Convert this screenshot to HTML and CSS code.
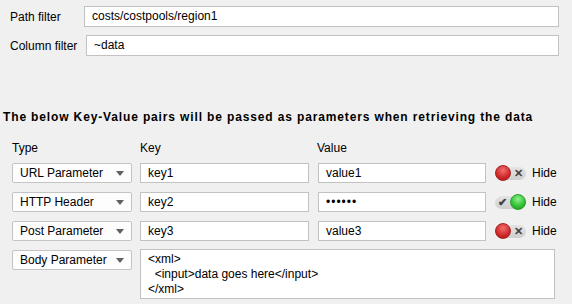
FILE: index.html
```html
<!DOCTYPE html>
<html>
<head>
<meta charset="utf-8">
<link rel="stylesheet" href="styles.css">
</head>
<body>
<div class="filters">
  <div class="frow">
    <span class="flabel">Path filter</span>
    <div class="field f1">costs/costpools/region1</div>
  </div>
  <div class="frow">
    <span class="flabel">Column filter</span>
    <div class="field f2">~data</div>
  </div>
</div>
<div class="heading">The below Key-Value pairs will be passed as parameters when retrieving the data</div>
<div class="grid">
  <div class="hdr">Type</div>
  <div class="hdr">Key</div>
  <div class="hdr">Value</div>
  <div></div>

  <div class="combo"><span>URL Parameter</span><span class="arrow"></span></div>
  <div class="field">key1</div>
  <div class="field">value1</div>
  <div class="hidecell"><span class="toggle off"><span class="knob"></span><span class="mark">&#x2715;</span></span><span>Hide</span></div>

  <div class="combo"><span>HTTP Header</span><span class="arrow"></span></div>
  <div class="field">key2</div>
  <div class="field dots">&#x2022;&#x2022;&#x2022;&#x2022;&#x2022;&#x2022;</div>
  <div class="hidecell"><span class="toggle on"><span class="mark">&#x2714;</span><span class="knob"></span></span><span>Hide</span></div>

  <div class="combo"><span>Post Parameter</span><span class="arrow"></span></div>
  <div class="field">key3</div>
  <div class="field">value3</div>
  <div class="hidecell"><span class="toggle off"><span class="knob"></span><span class="mark">&#x2715;</span></span><span>Hide</span></div>

  <div class="combo"><span>Body Parameter</span><span class="arrow"></span></div>
  <div class="area">&lt;xml&gt;<br>&nbsp;&nbsp;&lt;input&gt;data goes here&lt;/input&gt;<br>&lt;/xml&gt;</div>
</div>
</body>
</html>
```
FILE: styles.css
```css
* { box-sizing: border-box; }
html, body { margin: 0; padding: 0; }
body {
  width: 572px;
  height: 304px;
  overflow: hidden;
  background: #f0f0f0;
  font-family: "Liberation Sans", Arial, sans-serif;
  font-size: 12px;
  color: #000;
}
.filters {
  padding: 6px 0 0 10px;
  display: flex;
  flex-direction: column;
  gap: 8px;
}
.frow {
  display: flex;
  align-items: center;
  height: 21px;
}
.flabel { width: 74px; }
.field {
  background: #fff;
  border: 1px solid #c2c2c2;
  height: 21px;
  line-height: 19px;
  padding: 0 7px;
  white-space: nowrap;
  overflow: hidden;
}
.f1 { width: 475px; }
.f2 { width: 473px; margin-left: 2px; }
.heading {
  font-weight: bold;
  letter-spacing: 0.86px;
  margin: 54px 0 0 3px;
  line-height: 14px;
  white-space: nowrap;
}
.grid {
  margin: 14px 0 0 12px;
  display: grid;
  grid-template-columns: 120px 169px 169px auto;
  grid-template-rows: 16px 20px 20px 20px 50px;
  column-gap: 8px;
  row-gap: 9px;
  align-items: start;
}
.grid .hdr { line-height: 14px; padding-top: 3px; }
.grid .field { height: 20px; line-height: 18px; }
.grid > .field + .field { margin-left: 1px; }
.combo {
  height: 20px;
  border: 1px solid #c4c4c4;
  border-radius: 2px;
  background: #fdfdfd;
  display: flex;
  align-items: center;
  justify-content: space-between;
  padding: 0 7px 0 7px;
}
.arrow {
  width: 0; height: 0;
  border-left: 4px solid transparent;
  border-right: 4px solid transparent;
  border-top: 5px solid #606060;
}
.dots { font-size: 12px; letter-spacing: 1px; }
.area {
  grid-column: 2 / span 3;
  width: 415px;
  height: 50px;
  background: #fff;
  border: 1px solid #c2c2c2;
  padding: 2px 7px;
  line-height: 15px;
  margin-top: -1px;
}
.hidecell {
  display: flex;
  align-items: center;
  gap: 6px;
  height: 20px;
  padding-left: 1px;
}
.toggle {
  width: 31px;
  height: 13px;
  border-radius: 7px;
  background: linear-gradient(#e4e4e4, #cfcfcf);
  display: flex;
  align-items: center;
  justify-content: space-between;
}
.knob {
  width: 16px;
  height: 16px;
  border-radius: 50%;
  flex: none;
}
.off .knob {
  background: radial-gradient(circle at 50% 30%, #f07070, #d02828 60%, #a01818);
  border: 1px solid #a82020;
}
.on .knob {
  background: radial-gradient(circle at 50% 30%, #90f090, #30c030 60%, #209020);
  border: 1px solid #28a028;
}
.mark {
  font-size: 11px;
  font-weight: bold;
  color: #444;
  width: 15px;
  text-align: center;
  line-height: 13px;
}
```
